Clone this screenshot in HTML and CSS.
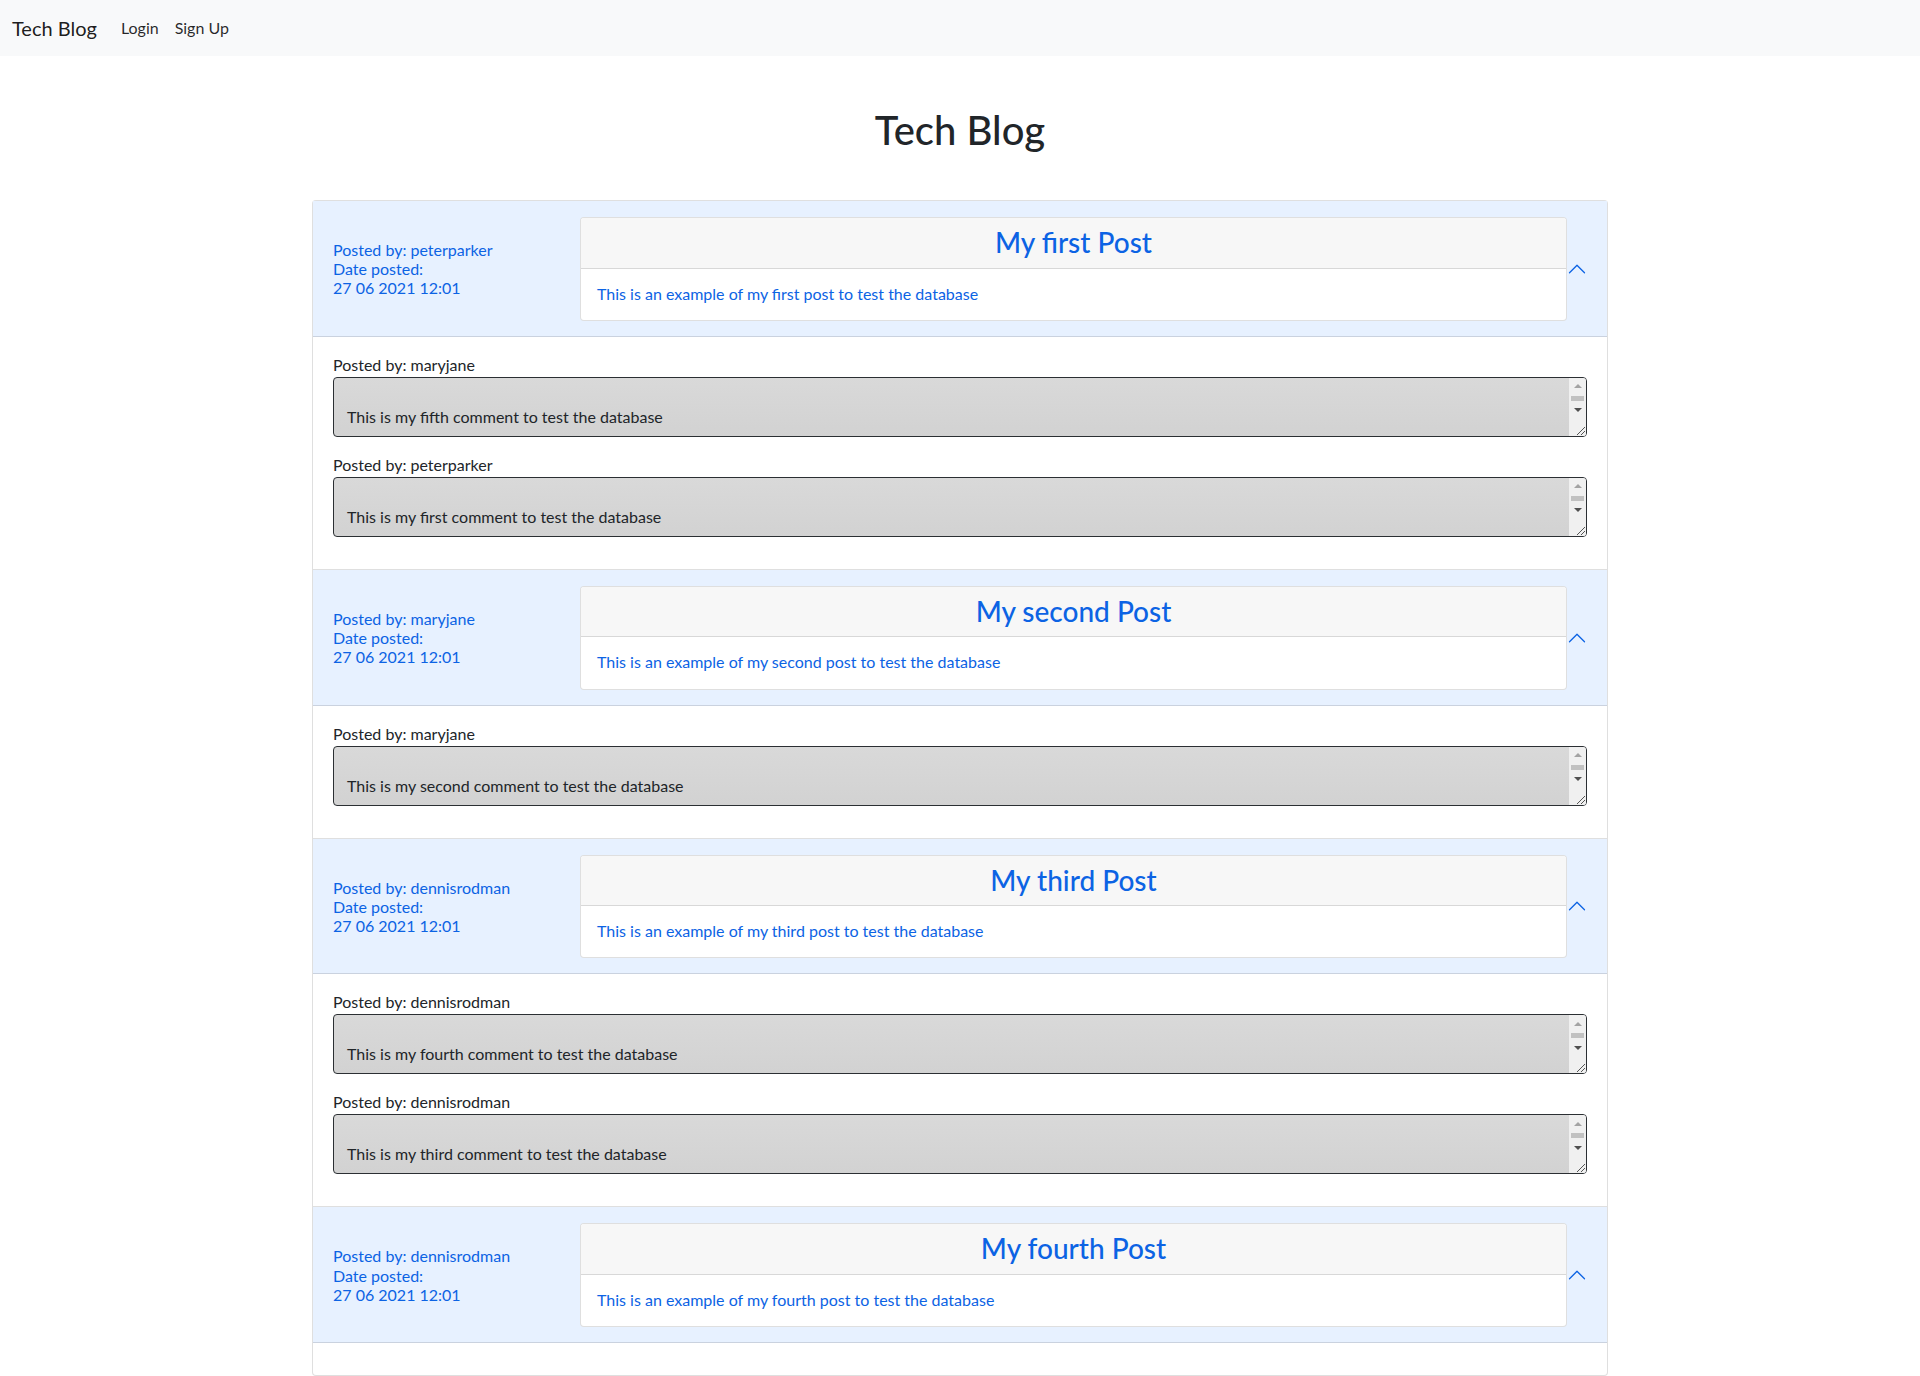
FILE: index.html
```html
<!DOCTYPE html>
<html lang="en">
<head>
<meta charset="utf-8">
<title>Tech Blog</title>
<link rel="stylesheet" href="styles.css">
</head>
<body>
<nav class="navbar">
  <a class="brand" href="#">Tech Blog</a>
  <ul class="nav-links">
    <li><a href="#">Login</a></li>
    <li><a href="#">Sign Up</a></li>
  </ul>
</nav>

<main class="container">
  <h1 class="page-title">Tech Blog</h1>

  <div class="accordion">

    <div class="acc-item">
      <h2 class="acc-header">
        <button class="acc-button" type="button">
          <div class="meta">
            <p>Posted by: peterparker</p>
            <p>Date posted:</p>
            <p>27 06 2021 12:01</p>
          </div>
          <div class="post-card">
            <div class="post-card-header"><h3>My first Post</h3></div>
            <div class="post-card-body">This is an example of my first post to test the database</div>
          </div>
          <svg class="chevron" viewBox="0 0 16 16"><path d="M1.646 11.354a.5.5 0 0 0 .708 0L8 5.707l5.646 5.647a.5.5 0 0 0 .708-.708l-6-6a.5.5 0 0 0-.708 0l-6 6a.5.5 0 0 0 0 .708z"/></svg>
        </button>
      </h2>
      <div class="acc-body">
        <div class="comment">
          <label class="comment-label">Posted by: maryjane</label>
          <div class="comment-box">
            <div class="comment-text">This is my fifth comment to test the database</div>
            <div class="scrollbar">
              <div class="sb-btn"><span class="tri-up"></span></div>
              <div class="sb-track"><span class="sb-thumb"></span></div>
              <div class="sb-btn"><span class="tri-down"></span></div>
              <div class="sb-corner"><svg viewBox="0 0 17 17"><path d="M16 8L8 16M16 12L12 16"/></svg></div>
            </div>
          </div>
        </div>
        <div class="comment">
          <label class="comment-label">Posted by: peterparker</label>
          <div class="comment-box">
            <div class="comment-text">This is my first comment to test the database</div>
            <div class="scrollbar">
              <div class="sb-btn"><span class="tri-up"></span></div>
              <div class="sb-track"><span class="sb-thumb"></span></div>
              <div class="sb-btn"><span class="tri-down"></span></div>
              <div class="sb-corner"><svg viewBox="0 0 17 17"><path d="M16 8L8 16M16 12L12 16"/></svg></div>
            </div>
          </div>
        </div>
      </div>
    </div>

    <div class="acc-item">
      <h2 class="acc-header">
        <button class="acc-button" type="button">
          <div class="meta">
            <p>Posted by: maryjane</p>
            <p>Date posted:</p>
            <p>27 06 2021 12:01</p>
          </div>
          <div class="post-card">
            <div class="post-card-header"><h3>My second Post</h3></div>
            <div class="post-card-body">This is an example of my second post to test the database</div>
          </div>
          <svg class="chevron" viewBox="0 0 16 16"><path d="M1.646 11.354a.5.5 0 0 0 .708 0L8 5.707l5.646 5.647a.5.5 0 0 0 .708-.708l-6-6a.5.5 0 0 0-.708 0l-6 6a.5.5 0 0 0 0 .708z"/></svg>
        </button>
      </h2>
      <div class="acc-body">
        <div class="comment">
          <label class="comment-label">Posted by: maryjane</label>
          <div class="comment-box">
            <div class="comment-text">This is my second comment to test the database</div>
            <div class="scrollbar">
              <div class="sb-btn"><span class="tri-up"></span></div>
              <div class="sb-track"><span class="sb-thumb"></span></div>
              <div class="sb-btn"><span class="tri-down"></span></div>
              <div class="sb-corner"><svg viewBox="0 0 17 17"><path d="M16 8L8 16M16 12L12 16"/></svg></div>
            </div>
          </div>
        </div>
      </div>
    </div>

    <div class="acc-item">
      <h2 class="acc-header">
        <button class="acc-button" type="button">
          <div class="meta">
            <p>Posted by: dennisrodman</p>
            <p>Date posted:</p>
            <p>27 06 2021 12:01</p>
          </div>
          <div class="post-card">
            <div class="post-card-header"><h3>My third Post</h3></div>
            <div class="post-card-body">This is an example of my third post to test the database</div>
          </div>
          <svg class="chevron" viewBox="0 0 16 16"><path d="M1.646 11.354a.5.5 0 0 0 .708 0L8 5.707l5.646 5.647a.5.5 0 0 0 .708-.708l-6-6a.5.5 0 0 0-.708 0l-6 6a.5.5 0 0 0 0 .708z"/></svg>
        </button>
      </h2>
      <div class="acc-body">
        <div class="comment">
          <label class="comment-label">Posted by: dennisrodman</label>
          <div class="comment-box">
            <div class="comment-text">This is my fourth comment to test the database</div>
            <div class="scrollbar">
              <div class="sb-btn"><span class="tri-up"></span></div>
              <div class="sb-track"><span class="sb-thumb"></span></div>
              <div class="sb-btn"><span class="tri-down"></span></div>
              <div class="sb-corner"><svg viewBox="0 0 17 17"><path d="M16 8L8 16M16 12L12 16"/></svg></div>
            </div>
          </div>
        </div>
        <div class="comment">
          <label class="comment-label">Posted by: dennisrodman</label>
          <div class="comment-box">
            <div class="comment-text">This is my third comment to test the database</div>
            <div class="scrollbar">
              <div class="sb-btn"><span class="tri-up"></span></div>
              <div class="sb-track"><span class="sb-thumb"></span></div>
              <div class="sb-btn"><span class="tri-down"></span></div>
              <div class="sb-corner"><svg viewBox="0 0 17 17"><path d="M16 8L8 16M16 12L12 16"/></svg></div>
            </div>
          </div>
        </div>
      </div>
    </div>

    <div class="acc-item">
      <h2 class="acc-header">
        <button class="acc-button" type="button">
          <div class="meta">
            <p>Posted by: dennisrodman</p>
            <p>Date posted:</p>
            <p>27 06 2021 12:01</p>
          </div>
          <div class="post-card">
            <div class="post-card-header"><h3>My fourth Post</h3></div>
            <div class="post-card-body">This is an example of my fourth post to test the database</div>
          </div>
          <svg class="chevron" viewBox="0 0 16 16"><path d="M1.646 11.354a.5.5 0 0 0 .708 0L8 5.707l5.646 5.647a.5.5 0 0 0 .708-.708l-6-6a.5.5 0 0 0-.708 0l-6 6a.5.5 0 0 0 0 .708z"/></svg>
        </button>
      </h2>
      <div class="acc-body"></div>
    </div>

  </div>
</main>
</body>
</html>
```

FILE: styles.css
```css
* { box-sizing: border-box; }

html, body {
  margin: 0;
  padding: 0;
  background: #fff;
}

body {
  font-family: Lato, "Open Sans", "Noto Sans", sans-serif;
  font-size: 16px;
  line-height: 1.5;
  color: #212529;
}

/* Navbar */
.navbar {
  display: flex;
  align-items: center;
  background: #f8f9fa;
  height: 56px;
  padding: 8px 12px;
}

.brand {
  font-size: 20px;
  line-height: 30px;
  padding: 5px 0;
  margin-right: 16px;
  color: rgba(0, 0, 0, 0.9);
  text-decoration: none;
}

.nav-links {
  display: flex;
  list-style: none;
  margin: 0;
  padding: 0;
}

.nav-links a {
  display: block;
  padding: 8px;
  font-size: 16px;
  line-height: 24px;
  color: rgba(0, 0, 0, 0.85);
  text-decoration: none;
}

/* Page */
.container {
  width: 1320px;
  margin: 0 auto;
  padding: 0 12px;
}

.page-title {
  margin: 50px 0 46px;
  font-size: 40px;
  font-weight: 500;
  line-height: 1.2;
  text-align: center;
  color: #212529;
}

/* Accordion */
.accordion {
  display: flex;
  flex-direction: column;
}

.acc-item {
  background: #fff;
  border: 1px solid rgba(0, 0, 0, 0.125);
}

.acc-item + .acc-item {
  border-top: 0;
}

.acc-item:first-child {
  border-top-left-radius: 4px;
  border-top-right-radius: 4px;
}

.acc-item:last-child {
  border-bottom-left-radius: 4px;
  border-bottom-right-radius: 4px;
}

.acc-header {
  margin: 0;
  font-size: 16px;
  font-weight: 400;
}

.acc-button {
  display: flex;
  align-items: center;
  width: 100%;
  padding: 16px 20px;
  border: 0;
  background: #e7f1ff;
  color: #0c63e4;
  box-shadow: inset 0 -1px 0 rgba(0, 0, 0, 0.125);
  font-family: inherit;
  font-size: 16px;
  line-height: 1.2;
  text-align: left;
  cursor: pointer;
}

.meta {
  width: 247px;
  flex-shrink: 0;
}

.meta p {
  margin: 0;
}

.post-card {
  flex: 1;
  background: #fff;
  border: 1px solid rgba(0, 0, 0, 0.125);
  border-radius: 4px;
  overflow: hidden;
}

.post-card-header {
  background: #f7f7f7;
  border-bottom: 1px solid rgba(0, 0, 0, 0.125);
  padding: 8px 16px;
}

.post-card-header h3 {
  margin: 0;
  font-size: 28px;
  font-weight: 500;
  line-height: 1.2;
  text-align: center;
}

.post-card-body {
  padding: 15px 16px 17px;
}

.chevron {
  width: 20px;
  height: 20px;
  flex-shrink: 0;
  margin-left: auto;
  fill: #0c63e4;
}

.acc-body {
  padding: 16px 20px;
}

/* Comments */
.comment {
  margin-bottom: 16px;
}

.comment-label {
  display: block;
  line-height: 24px;
  color: #212529;
}

.comment-box {
  display: flex;
  height: 60px;
  border: 1px solid #2b2f33;
  border-radius: 4px;
  background: linear-gradient(#d9d9d9, #d2d2d2);
  overflow: hidden;
}

.comment-text {
  flex: 1;
  padding: 27px 12px 6px 13px;
  line-height: 24px;
  color: #212529;
}

.scrollbar {
  width: 17px;
  flex-shrink: 0;
  display: flex;
  flex-direction: column;
  background: #f0f0f0;
}

.sb-btn {
  height: 17px;
  display: flex;
  align-items: center;
  justify-content: center;
}

.tri-up {
  width: 0;
  height: 0;
  border-left: 4px solid transparent;
  border-right: 4px solid transparent;
  border-bottom: 4px solid #a3a3a3;
}

.tri-down {
  width: 0;
  height: 0;
  border-left: 4px solid transparent;
  border-right: 4px solid transparent;
  border-top: 4px solid #505050;
}

.sb-track {
  flex: 1;
  display: flex;
  align-items: center;
  justify-content: center;
}

.sb-thumb {
  display: block;
  width: 13px;
  height: 5px;
  background: #c1c1c1;
}

.sb-corner {
  height: 17px;
  background: #f0f0f0;
}

.sb-corner svg {
  display: block;
  width: 17px;
  height: 17px;
  stroke: #555;
  stroke-width: 1;
  fill: none;
}
```
